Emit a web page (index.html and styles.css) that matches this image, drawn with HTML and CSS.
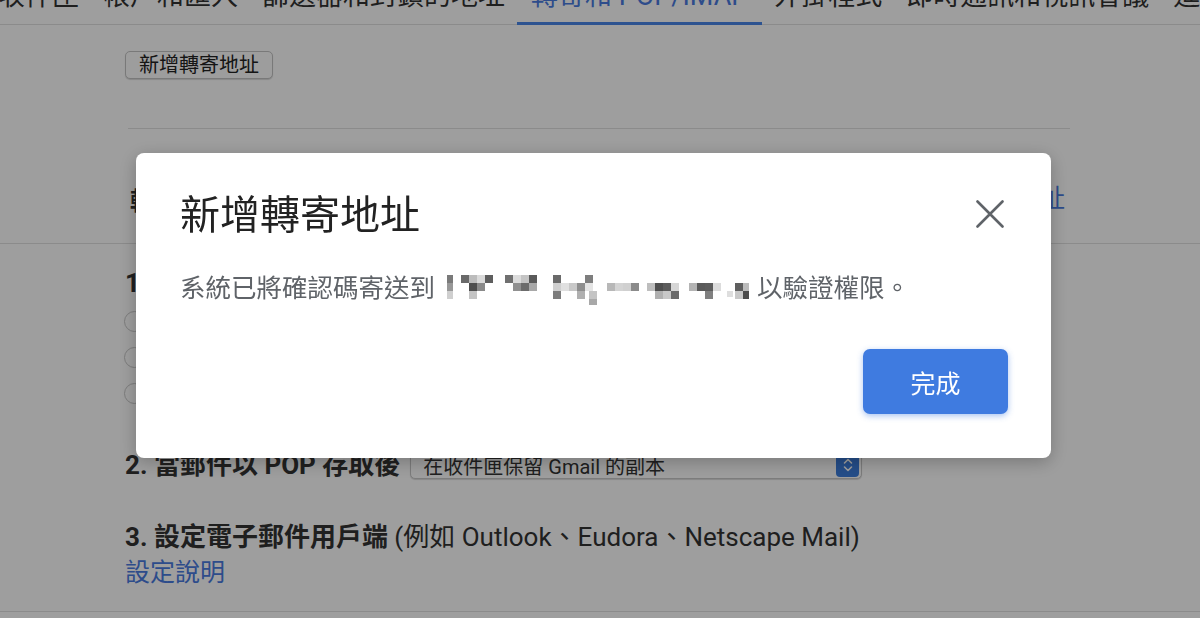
FILE: index.html
```html
<!DOCTYPE html>
<html lang="zh-Hant">
<head>
  <meta charset="UTF-8">
  <meta name="viewport" content="width=device-width, initial-scale=1.0">
  <title>轉寄和 POP/IMAP</title>
  <link rel="stylesheet" href="styles.css">
</head>
<body>
  <div class="page">
    <!-- Pestañas de configuración (parte superior recortada por el scroll) -->
    <nav class="tabs">
      <span class="tab">收件匣</span>
      <span class="tab">帳戶和匯入</span>
      <span class="tab">篩選器和封鎖的地址</span>
      <span class="tab active">轉寄和 POP/IMAP</span>
      <span class="tab">外掛程式</span>
      <span class="tab">即時通訊和視訊會議</span>
      <span class="tab">進階</span>
      <span class="tab">離線</span>
    </nav>

    <div class="content">
      <div class="add-row">
        <button class="btn-small">新增轉寄地址</button>
      </div>
      <hr class="rule">
      <div class="forward-row">
        <span class="label">轉寄：</span>
        <a class="link" href="#">進一步瞭解轉寄功能及新增轉寄地址</a>
      </div>
    </div>

    <div class="content pop">
      <div class="section-title first"><b>1. 狀態：</b>POP 已停用</div>
      <label class="radio-row"><span class="radio"></span>為所有郵件啟用 POP 功能</label>
      <label class="radio-row"><span class="radio"></span>為從現在開始收到的郵件啟用 POP 功能</label>
      <label class="radio-row"><span class="radio"></span>停用 POP 功能</label>

      <div class="pop-row">
        <b class="section-label">2. 當郵件以 POP 存取後</b>
        <div class="select">
          <span>在收件匣保留 Gmail 的副本</span>
          <span class="stepper">
            <svg width="12" height="16" viewBox="0 0 12 16"><path d="M2.5 6 6 2.5 9.5 6M2.5 10 6 13.5 9.5 10" fill="none" stroke="#fff" stroke-width="1.6" stroke-linecap="round" stroke-linejoin="round"/></svg>
          </span>
        </div>
      </div>

      <div class="section-title client"><b>3. 設定電子郵件用戶端</b> (例如 Outlook、Eudora、Netscape Mail)</div>
      <a class="link help" href="#">設定說明</a>
    </div>
    <div class="divider"></div>
  </div>

  <!-- Diálogo modal -->
  <div class="backdrop">
    <div class="dialog">
      <div class="dialog-head">
        <h2 class="dialog-title">新增轉寄地址</h2>
        <button class="close" aria-label="關閉">
          <svg width="28" height="28" viewBox="0 0 28 28"><path d="M1.5 1.5 26.5 26.5M26.5 1.5 1.5 26.5" stroke="#5f6368" stroke-width="2.6" stroke-linecap="round"/></svg>
        </button>
      </div>
      <p class="dialog-text">系統已將確認碼寄送到<svg class="redacted" width="302" height="34" viewBox="0 0 302 34">
          <g>
            <rect x="0" y="4" width="6" height="8" fill="#7a7a7a"/><rect x="0" y="12" width="6" height="8" fill="#989898"/><rect x="0" y="20" width="6" height="8" fill="#cfcfcf"/>
            <rect x="14" y="4" width="8" height="8" fill="#6a6a6a"/><rect x="22" y="4" width="8" height="8" fill="#bcbcbc"/><rect x="30" y="4" width="8" height="8" fill="#dadada"/><rect x="38" y="4" width="8" height="8" fill="#5e5e5e"/>
            <rect x="22" y="12" width="8" height="8" fill="#4e4e4e"/><rect x="30" y="12" width="8" height="8" fill="#8a8a8a"/><rect x="22" y="20" width="8" height="8" fill="#c4c4c4"/>
            <rect x="58" y="4" width="8" height="8" fill="#707070"/><rect x="66" y="4" width="8" height="8" fill="#dcdcdc"/><rect x="74" y="4" width="8" height="8" fill="#c4c4c4"/><rect x="82" y="4" width="8" height="8" fill="#5a5a5a"/>
            <rect x="66" y="12" width="8" height="8" fill="#909090"/><rect x="74" y="12" width="8" height="8" fill="#6c6c6c"/><rect x="82" y="12" width="8" height="8" fill="#a8a8a8"/>
            <rect x="106" y="4" width="8" height="8" fill="#6a6a6a"/><rect x="106" y="12" width="8" height="8" fill="#cfcfcf"/><rect x="106" y="20" width="8" height="8" fill="#7c7c7c"/><rect x="114" y="12" width="8" height="8" fill="#e0e0e0"/>
            <rect x="122" y="12" width="8" height="8" fill="#c8c8c8"/><rect x="130" y="12" width="8" height="8" fill="#8e8e8e"/><rect x="130" y="20" width="8" height="8" fill="#b0b0b0"/><rect x="138" y="4" width="8" height="8" fill="#7e7e7e"/>
            <rect x="138" y="12" width="8" height="8" fill="#e4e4e4"/><rect x="142" y="20" width="8" height="8" fill="#c4c4c4"/><rect x="142" y="28" width="8" height="6" fill="#a8a8a8"/>
            <rect x="160" y="12" width="8" height="8" fill="#b8b8b8"/><rect x="168" y="12" width="8" height="8" fill="#d4d4d4"/><rect x="176" y="12" width="8" height="8" fill="#d0d0d0"/><rect x="184" y="12" width="8" height="8" fill="#8b8b8b"/>
            <rect x="200" y="12" width="8" height="8" fill="#bebebe"/><rect x="208" y="12" width="8" height="8" fill="#4f4f4f"/><rect x="216" y="12" width="8" height="8" fill="#5c5c5c"/><rect x="224" y="12" width="8" height="8" fill="#d6d6d6"/>
            <rect x="208" y="20" width="8" height="8" fill="#b0b0b0"/><rect x="216" y="20" width="8" height="8" fill="#c8c8c8"/><rect x="224" y="20" width="8" height="8" fill="#6a6a6a"/>
            <rect x="242" y="12" width="8" height="8" fill="#b4b4b4"/><rect x="250" y="12" width="8" height="8" fill="#5a5a5a"/><rect x="258" y="12" width="8" height="8" fill="#5d5d5d"/><rect x="266" y="12" width="8" height="8" fill="#dcdcdc"/>
            <rect x="258" y="20" width="8" height="8" fill="#808080"/><rect x="280" y="20" width="6" height="6" fill="#dedede"/>
            <rect x="288" y="12" width="8" height="8" fill="#5f5f5f"/><rect x="296" y="12" width="6" height="8" fill="#bcbcbc"/><rect x="288" y="20" width="8" height="8" fill="#c8c8c8"/><rect x="296" y="20" width="6" height="8" fill="#4c4c4c"/>
          </g>
        </svg>以驗證權限。</p>
      <div class="dialog-actions">
        <button class="done">完成</button>
      </div>
    </div>
  </div>
</body>
</html>
```

FILE: styles.css
```css
body {
  margin: 0;
  background: #fff;
  color: #333;
  font-family: Roboto, "Noto Sans CJK TC", sans-serif;
}
.page {
  width: 1200px;
  padding-top: 1px;
  margin-top: -1px;
}
/* Pestañas */
.tabs {
  display: flex;
  margin: -20px 0 0 -14px;
  border-bottom: 1px solid #e0e0e0;
  white-space: nowrap;
}
.tab {
  font-size: 27px;
  line-height: 32px;
  padding: 0 12px 10px;
  border-bottom: 3px solid transparent;
  margin-bottom: -1px;
  color: #333;
}
.tab.active {
  color: #4a7be0;
  border-bottom-color: #4a86e8;
  padding: 0 14px 10px;
}
/* Contenido */
.content {
  padding: 0 130px 0 125px;
}
.content.pop {
  border-top: 1px solid #e0e0e0;
}
.divider {
  height: 1px;
  margin-top: 20px;
  background: #e0e0e0;
}
.add-row {
  padding-top: 26px;
}
.btn-small {
  height: 28px;
  padding: 0 13px;
  font-family: inherit;
  font-size: 20px;
  line-height: 26px;
  color: #222;
  background: #fdfdfd;
  border: 1px solid #c4c4c4;
  border-radius: 5px;
  box-shadow: 0 1px 1px rgba(0,0,0,0.15);
}
.rule {
  border: 0;
  border-top: 1px solid #e0e0e0;
  margin: 49px 0 0 3px;
}
.forward-row {
  display: flex;
  justify-content: space-between;
  align-items: center;
  height: 40px;
  margin: 50px 5px 24px 5px;
  font-size: 25px;
}
.label {
  font-weight: bold;
}
.link {
  color: #4a7be0;
  text-decoration: none;
  font-size: 25px;
  line-height: 36px;
}
.link.help {
  display: block;
  width: max-content;
}
.section-title {
  font-size: 26px;
  line-height: 36px;
  white-space: nowrap;
}
.section-title.first {
  padding-top: 21px;
  height: 38px;
}
.section-title.client {
  margin-top: 36px;
}
.radio-row {
  display: flex;
  align-items: center;
  gap: 14px;
  height: 36px;
  font-size: 22px;
}
.radio {
  width: 19px;
  height: 19px;
  margin-left: -1px;
  border: 1.5px solid #c8c8c8;
  border-radius: 50%;
  background: #fff;
}
.pop-row {
  display: flex;
  align-items: center;
  gap: 10px;
  height: 36px;
  margin-top: 36px;
}
.section-label {
  font-size: 26px;
  line-height: 36px;
  white-space: nowrap;
}
.select {
  display: flex;
  align-items: center;
  justify-content: space-between;
  box-sizing: border-box;
  width: 452px;
  height: 28px;
  padding: 0 2px 0 12px;
  font-size: 20px;
  color: #333;
  background: #fff;
  border: 1px solid #c8c8c8;
  border-radius: 5px;
  box-shadow: 0 1px 1px rgba(0,0,0,0.15);
}
.stepper {
  display: flex;
  align-items: center;
  justify-content: center;
  width: 23px;
  height: 23px;
  background: #3b7ddd;
  border-radius: 4px;
}
/* Modal */
.backdrop {
  position: fixed;
  inset: 0;
  background: rgba(0,0,0,0.38);
}
.dialog {
  position: absolute;
  left: 136px;
  top: 153px;
  width: 915px;
  box-sizing: border-box;
  padding: 38px 43px 44px 44px;
  background: #fff;
  border-radius: 8px;
  box-shadow: 0 4px 18px rgba(0,0,0,0.25);
}
.dialog-head {
  display: flex;
  justify-content: space-between;
  align-items: center;
  height: 50px;
}
.dialog-title {
  margin: 0;
  font-size: 40px;
  font-weight: 400;
  line-height: 50px;
  color: #222;
}
.close {
  display: flex;
  align-items: center;
  justify-content: center;
  width: 36px;
  height: 36px;
  padding: 0;
  background: none;
  border: 0;
  margin-top: -4px;
}
.dialog-text {
  margin: 29px 0 0;
  font-size: 25.5px;
  line-height: 36px;
  color: #5f6368;
  display: flex;
  align-items: center;
  white-space: nowrap;
}
.redacted {
  margin: 0 8px 0 12px;
}
.dialog-actions {
  display: flex;
  justify-content: flex-end;
  margin-top: 43px;
}
.done {
  width: 145px;
  height: 65px;
  font-family: inherit;
  font-size: 25px;
  color: #fff;
  background: #3f7be0;
  border: 0;
  border-radius: 7px;
  box-shadow: 0 2px 6px rgba(63,123,224,0.45);
}
```
